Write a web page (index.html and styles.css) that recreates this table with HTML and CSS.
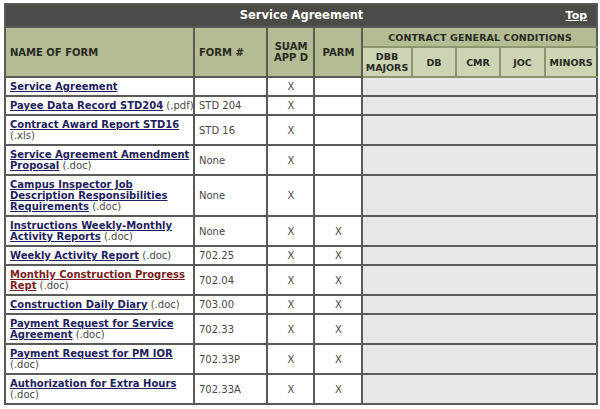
FILE: index.html
```html
<!DOCTYPE html>
<html>
<head>
<meta charset="utf-8">
<link rel="stylesheet" href="styles.css">
</head>
<body>
<div class="wrap">
<table class="forms">
  <colgroup>
    <col class="c-name"><col class="c-form"><col class="c-suam"><col class="c-parm">
    <col class="c-dbb"><col class="c-db"><col class="c-cmr"><col class="c-joc"><col class="c-min">
  </colgroup>
  <thead>
    <tr class="title-row">
      <th colspan="9" class="title">Service Agreement<a class="top" href="#">Top</a></th>
    </tr>
    <tr class="hdr">
      <th rowspan="2" class="left">NAME OF FORM</th>
      <th rowspan="2" class="left">FORM #</th>
      <th rowspan="2">SUAM<br>APP D</th>
      <th rowspan="2">PARM</th>
      <th colspan="5" class="cgc">CONTRACT GENERAL CONDITIONS</th>
    </tr>
    <tr class="sub">
      <th>DBB<br>MAJORS</th><th>DB</th><th>CMR</th><th>JOC</th><th>MINORS</th>
    </tr>
  </thead>
  <tbody>
    <tr><td class="name"><a href="#">Service Agreement</a></td><td></td><td class="x">X</td><td></td><td colspan="5" class="gray"></td></tr>
    <tr><td class="name"><a href="#">Payee Data Record STD204</a> (.pdf)</td><td>STD 204</td><td class="x">X</td><td></td><td colspan="5" class="gray"></td></tr>
    <tr><td class="name"><a href="#">Contract Award Report STD16</a><br>(.xls)</td><td>STD 16</td><td class="x">X</td><td></td><td colspan="5" class="gray"></td></tr>
    <tr><td class="name"><a href="#">Service Agreement Amendment<br>Proposal</a> (.doc)</td><td>None</td><td class="x">X</td><td></td><td colspan="5" class="gray"></td></tr>
    <tr><td class="name"><a href="#">Campus Inspector Job<br>Description Responsibilities<br>Requirements</a> (.doc)</td><td>None</td><td class="x">X</td><td></td><td colspan="5" class="gray"></td></tr>
    <tr><td class="name"><a href="#">Instructions Weekly-Monthly<br>Activity Reports</a> (.doc)</td><td>None</td><td class="x">X</td><td class="x">X</td><td colspan="5" class="gray"></td></tr>
    <tr><td class="name"><a href="#">Weekly Activity Report</a> (.doc)</td><td>702.25</td><td class="x">X</td><td class="x">X</td><td colspan="5" class="gray"></td></tr>
    <tr><td class="name"><a href="#" class="visited">Monthly Construction Progress<br>Rept</a> (.doc)</td><td>702.04</td><td class="x">X</td><td class="x">X</td><td colspan="5" class="gray"></td></tr>
    <tr><td class="name"><a href="#">Construction Daily Diary</a> (.doc)</td><td>703.00</td><td class="x">X</td><td class="x">X</td><td colspan="5" class="gray"></td></tr>
    <tr><td class="name"><a href="#">Payment Request for Service<br>Agreement</a> (.doc)</td><td>702.33</td><td class="x">X</td><td class="x">X</td><td colspan="5" class="gray"></td></tr>
    <tr><td class="name"><a href="#">Payment Request for PM IOR</a><br>(.doc)</td><td>702.33P</td><td class="x">X</td><td class="x">X</td><td colspan="5" class="gray"></td></tr>
    <tr><td class="name"><a href="#">Authorization for Extra Hours</a><br>(.doc)</td><td>702.33A</td><td class="x">X</td><td class="x">X</td><td colspan="5" class="gray"></td></tr>
  </tbody>
</table>
</div>
</body>
</html>
```

FILE: styles.css
```css
html, body {
  margin: 0;
  padding: 0;
  background: #ffffff;
}
.wrap {
  padding: 3px 0 0 4px;
}
.forms {
  border-collapse: collapse;
  table-layout: fixed;
  width: 592px;
  font-family: "DejaVu Sans", Verdana, sans-serif;
  font-size: 10px;
  line-height: 11px;
  color: #484848;
}
.c-name { width: 189px; }
.c-form { width: 73px; }
.c-suam { width: 47px; }
.c-parm { width: 48px; }
.c-dbb { width: 50px; }
.c-db { width: 44px; }
.c-cmr { width: 44px; }
.c-joc { width: 45px; }
.c-min { width: 52px; }

.forms td, .forms th {
  border: 2px solid #5a5a58;
  padding: 3px 3px 3px 4px;
  vertical-align: middle;
}
.name {
  white-space: nowrap;
}
.title {
  background: #4b4c48;
  color: #ffffff;
  height: 15px;
  padding: 3px 28px 3px 8px;
  position: relative;
  text-align: center;
  font-size: 11.5px;
  font-weight: bold;
}
.forms a.top {
  position: absolute;
  right: 9px;
  top: 5px;
  color: #ffffff;
  font-size: 11px;
  font-weight: bold;
}
.hdr th, .sub th {
  background: #b3bc93;
  color: #2a2a22;
  font-size: 10px;
  font-weight: bold;
  line-height: 11px;
  text-align: center;
}
.hdr th.left {
  text-align: left;
}
.hdr th.cgc {
  height: 12px;
  font-size: 9.5px;
  letter-spacing: 0.1px;
  border-bottom: 2px solid #8e9870;
}
.sub th {
  background: #ccd4b4;
  height: 24px;
  border-color: #8a9470;
  padding: 2px 2px;
  font-size: 9.5px;
}
.sub th:last-child {
  border-right-color: #5a5a58;
}
.forms a {
  color: #1e1e5e;
  font-weight: bold;
  text-decoration: underline;
}
.forms a.visited {
  color: #7a1e22;
}
.x {
  text-align: center;
}
.gray {
  background: #e8e8e8;
}
```
